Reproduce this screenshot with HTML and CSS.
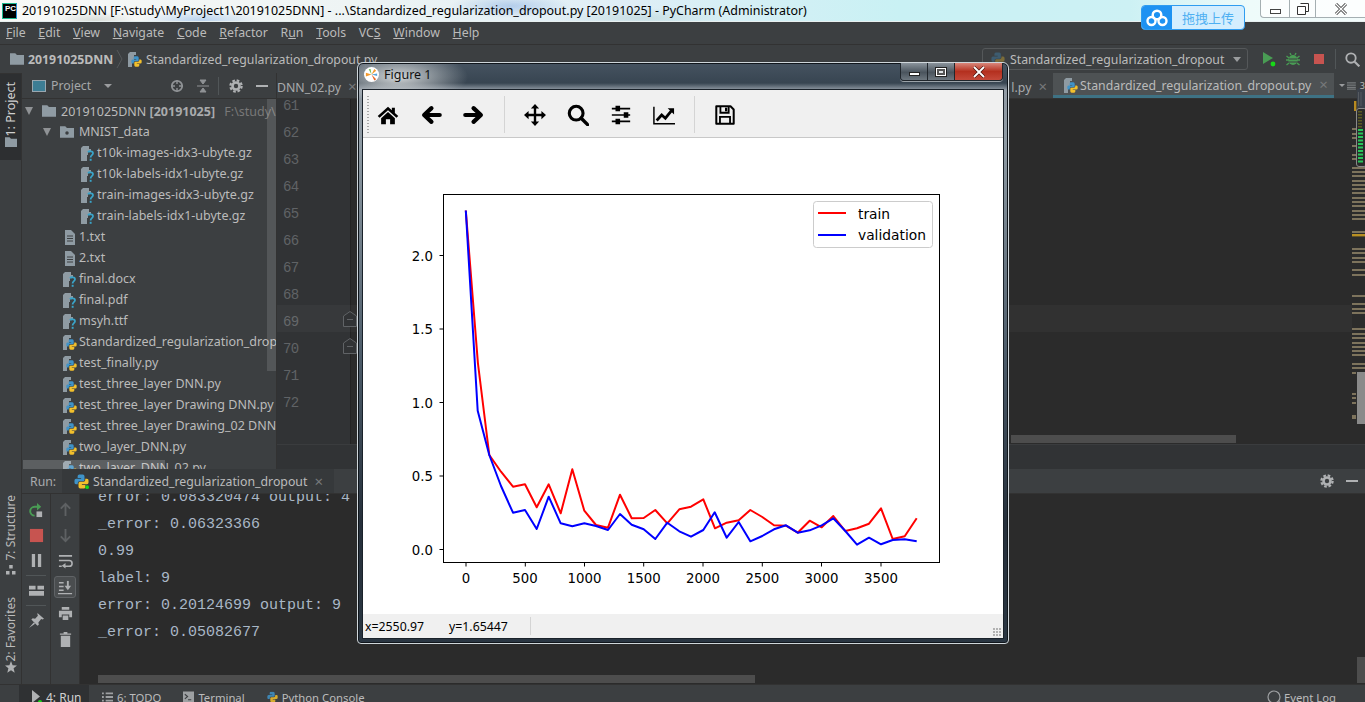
FILE: index.html
```html
<!DOCTYPE html>
<html lang="en">
<head>
<meta charset="utf-8">
<title>20191025DNN - PyCharm</title>
<link rel="stylesheet" href="styles.css">
</head>
<body>
<svg class="defs" width="0" height="0" aria-hidden="true">
  <defs>
    <symbol id="folder" viewBox="0 0 16 13"><path d="M0 0H6L8 2H16V13H0Z" fill="#8f9ba3"/></symbol>
    <symbol id="pkg" viewBox="0 0 16 13"><path d="M0 0H6L8 2H16V13H0Z" fill="#8f9ba3"/><circle cx="8" cy="7.5" r="2" fill="#3c3f41"/></symbol>
    <symbol id="txt" viewBox="0 0 16 16"><path d="M3 1H9L13 5V16H3Z" fill="#8f9ba3"/><path d="M5 7H11M5 9.5H11M5 12H11" stroke="#3c3f41"/></symbol>
    <symbol id="unk" viewBox="0 0 16 16"><path d="M1 3L3 1H9V4H11V7H8V10H7V16H1Z" fill="#8f9ba3"/><path d="M8 7.2C9 5.8 13 5.8 13 8.2C13 10.2 10.6 10 10.6 12.4" fill="none" stroke="#3aa4c9" stroke-width="1.8"/><rect x="9.7" y="13.8" width="1.9" height="2" fill="#3aa4c9"/></symbol>
    <symbol id="logo" viewBox="0 0 16 16">
      <path d="M5.6 0.5H9.4A2 2 0 0 1 11.2 2.4V6.2A1.6 1.6 0 0 1 9.6 7.8H5.8A2 2 0 0 0 4 9.6V11H2.2A1.9 1.9 0 0 1 0.5 9V6.9A1.9 1.9 0 0 1 2.2 5H7.6V4.2H3.9V2.2A1.8 1.8 0 0 1 5.6 0.5Z" fill="#3f93c8"/>
      <path d="M10.4 15.5H6.6A2 2 0 0 1 4.8 13.6V9.8A1.6 1.6 0 0 1 6.4 8.2H10.2A2 2 0 0 0 12 6.4V5H13.8A1.9 1.9 0 0 1 15.5 7V9.1A1.9 1.9 0 0 1 13.8 11H8.4V11.8H12.1V13.8A1.8 1.8 0 0 1 10.4 15.5Z" fill="#f2c02c"/>
    </symbol>
    <symbol id="py" viewBox="0 0 16 16">
      <path d="M1 3L3 1H9V4H7V10H5V16H1Z" fill="#8f9ba3"/>
      <use href="#logo" x="4" y="5" width="11" height="11"/>
    </symbol>
    <symbol id="gear" viewBox="0 0 16 16"><circle cx="8" cy="8" r="4" fill="none" stroke="#afb1b3" stroke-width="3"/><circle cx="8" cy="8" r="6.4" fill="none" stroke="#afb1b3" stroke-width="2.6" stroke-dasharray="3 2.03"/></symbol>
    <symbol id="foldmark" viewBox="0 0 14 16"><path d="M.5 15.500V5L7 .5L13.500 5V15.500Z" fill="#313335" stroke="#606366"/><path d="M4 8.500H10" stroke="#606366"/></symbol>
  </defs>
</svg>

<div class="ide">
  <header class="titlebar">
    <span class="pc-logo">PC</span>
    <span class="title-text">20191025DNN [F:\study\MyProject1\20191025DNN] - ...\Standardized_regularization_dropout.py [20191025] - PyCharm (Administrator)</span>
  </header>

  <nav class="menubar">
    <span><u>F</u>ile</span><span><u>E</u>dit</span><span><u>V</u>iew</span><span><u>N</u>avigate</span><span><u>C</u>ode</span><span><u>R</u>efactor</span><span>R<u>u</u>n</span><span><u>T</u>ools</span><span>VC<u>S</u></span><span><u>W</u>indow</span><span><u>H</u>elp</span>
  </nav>

  <div class="navbar">
    <svg class="nav-folder"><use href="#folder"/></svg>
    <b class="crumb-root">20191025DNN</b>
    <svg class="chev" viewBox="0 0 7 20"><path d="M1 1L6 10L1 19" fill="none" stroke="#55585a"/></svg>
    <svg class="ico16 nav-py"><use href="#py"/></svg>
    <span class="crumb">Standardized_regularization_dropout.py</span>
    <div class="run-config">
      <svg class="ico14 dim"><use href="#logo"/></svg>
      <span class="config-name">Standardized_regularization_dropout</span>
      <i class="caret"></i>
    </div>
    <svg class="nav-run" viewBox="0 0 14 16"><path d="M1 1L11 7L1 13Z" fill="#499c54"/><circle cx="11" cy="13" r="2.4" fill="#18d818"/></svg>
    <svg class="nav-bug" viewBox="0 0 14 14"><ellipse cx="7" cy="8" rx="4.6" ry="5" fill="#499c54"/><path d="M0.5 4L3 6M13.5 4L11 6M0 8H3M14 8H11M0.5 13L3 11M13.5 13L11 11M4 1L5 3M10 1L9 3" stroke="#499c54" stroke-width="1.4"/><path d="M3 7H11M3 10H11" stroke="#3c3f41"/></svg>
    <i class="nav-stop"></i>
    <i class="nav-div"></i>
    <svg class="nav-search" viewBox="0 0 14 14"><circle cx="5.6" cy="5.6" r="4.4" fill="none" stroke="#afb1b3" stroke-width="1.7"/><path d="M9 9L13.4 13.4" stroke="#afb1b3" stroke-width="2"/></svg>
  </div>

  <div class="workspace">
    <aside class="strip">
      <div class="strip-active">
        <span class="vtext">1: Project</span>
        <svg class="strip-folder"><use href="#folder"/></svg>
      </div>
      <div class="strip-lower">
        <span class="vtext">7: Structure</span>
        <svg class="strip-ico struct" viewBox="0 0 10 10"><path d="M3.2 0H6.7V3.5H3.2ZM0 6H3.5V9.5H0ZM6 6H9.5V9.5H6Z" fill="#afb1b3"/></svg>
        <span class="vtext fav">2: Favorites</span>
        <svg class="strip-ico star" viewBox="0 0 12 12"><path d="M6 0L7.6 4.2L12 4.5L8.6 7.3L9.7 11.8L6 9.3L2.3 11.8L3.4 7.3L0 4.5L4.4 4.2Z" fill="#afb1b3"/></svg>
      </div>
    </aside>

    <div class="center">
      <div class="upper">
        <section class="project">
          <div class="project-head">
            <svg class="proj-ico" viewBox="0 0 14 12"><rect x=".5" y=".5" width="13" height="11" fill="#3d7d94" stroke="#9aa7b0"/></svg>
            <span class="proj-label">Project</span>
            <i class="caret small"></i>
            <svg class="head-ico target" viewBox="0 0 14 14"><circle cx="7" cy="7" r="5.2" fill="none" stroke="#8f9295" stroke-width="1.8"/><path d="M7 1V5M7 9V13M1 7H5M9 7H13" stroke="#8f9295" stroke-width="1.4"/></svg>
            <svg class="head-ico collapse" viewBox="0 0 14 14"><path d="M1 7H13M7 5L4 1H10ZM7 9L4 13H10Z" stroke="#8f9295" fill="#8f9295"/></svg>
            <i class="head-div"></i>
            <svg class="head-ico cog"><use href="#gear"/></svg>
            <i class="head-min"></i>
          </div>
          <ul class="tree">
            <li class="lv0"><i class="arrow"></i><svg class="fold"><use href="#folder"/></svg><span>20191025DNN <b>[20191025]</b> <em>F:\study\MyProject1</em></span></li>
            <li class="lv1"><i class="arrow"></i><svg class="fold"><use href="#pkg"/></svg><span>MNIST_data</span></li>
            <li class="lv2"><svg class="file"><use href="#unk"/></svg><span>t10k-images-idx3-ubyte.gz</span></li>
            <li class="lv2"><svg class="file"><use href="#unk"/></svg><span>t10k-labels-idx1-ubyte.gz</span></li>
            <li class="lv2"><svg class="file"><use href="#unk"/></svg><span>train-images-idx3-ubyte.gz</span></li>
            <li class="lv2"><svg class="file"><use href="#unk"/></svg><span>train-labels-idx1-ubyte.gz</span></li>
            <li class="lv3"><svg class="file"><use href="#txt"/></svg><span>1.txt</span></li>
            <li class="lv3"><svg class="file"><use href="#txt"/></svg><span>2.txt</span></li>
            <li class="lv3"><svg class="file"><use href="#unk"/></svg><span>final.docx</span></li>
            <li class="lv3"><svg class="file"><use href="#unk"/></svg><span>final.pdf</span></li>
            <li class="lv3"><svg class="file"><use href="#unk"/></svg><span>msyh.ttf</span></li>
            <li class="lv3"><svg class="file"><use href="#py"/></svg><span>Standardized_regularization_dropout.py</span></li>
            <li class="lv3"><svg class="file"><use href="#py"/></svg><span>test_finally.py</span></li>
            <li class="lv3"><svg class="file"><use href="#py"/></svg><span>test_three_layer DNN.py</span></li>
            <li class="lv3"><svg class="file"><use href="#py"/></svg><span>test_three_layer Drawing DNN.py</span></li>
            <li class="lv3"><svg class="file"><use href="#py"/></svg><span>test_three_layer Drawing_02 DNN.py</span></li>
            <li class="lv3"><svg class="file"><use href="#py"/></svg><span>two_layer_DNN.py</span></li>
            <li class="lv3"><svg class="file"><use href="#py"/></svg><span>two_layer_DNN_02.py</span></li>
          </ul>
          <i class="tree-vbar"></i>
          <i class="tree-hbar"></i>
        </section>

        <section class="editor">
          <div class="tabs">
            <span class="tab tab-left">DNN_02.py <i class="x">×</i></span>
            <span class="tab-space"></span>
            <span class="tab tab-right">l.py <i class="x">×</i></span>
            <span class="tab active"><svg class="ico16"><use href="#py"/></svg>Standardized_regularization_dropout.py <i class="x">×</i></span>
            <span class="tab-more"><i class="caret tiny"></i><svg class="lines" viewBox="0 0 10 8"><path d="M0 .5H10M0 3H10M0 5.5H10M0 7.5H10" stroke="#8f9295"/></svg><small>3</small></span>
          </div>
          <div class="editor-body">
            <div class="gutter">
              <span>61</span><span>62</span><span>63</span><span>64</span><span>65</span><span>66</span><span>67</span><span>68</span><span>69</span><span>70</span><span>71</span><span>72</span>
            </div>
            <div class="code"></div>
            <i class="curline"></i>
            <svg class="foldmark f1"><use href="#foldmark"/></svg>
            <svg class="foldmark f2"><use href="#foldmark"/></svg>
            <i class="code-hbar"></i>
          </div>
          <div class="editor-foot"></div>
          <svg class="stripes" viewBox="1352 73 13 371">
            <g fill="#7d735c">
              <rect x="1352" y="128" width="4" height="2"/><rect x="1352" y="133" width="4" height="2"/><rect x="1352" y="137" width="4" height="2"/><rect x="1352" y="145" width="4" height="2"/><rect x="1352" y="154" width="4" height="2"/><rect x="1352" y="158" width="4" height="2"/>
              <rect x="1352" y="167" width="13" height="2"/><rect x="1352" y="171" width="13" height="2"/><rect x="1352" y="175" width="13" height="2"/><rect x="1352" y="180" width="13" height="2"/><rect x="1352" y="184" width="13" height="2"/><rect x="1352" y="188" width="13" height="2"/><rect x="1352" y="192" width="13" height="2"/><rect x="1352" y="197" width="13" height="2"/><rect x="1352" y="201" width="13" height="2"/><rect x="1352" y="205" width="13" height="2"/><rect x="1352" y="210" width="13" height="2"/><rect x="1352" y="214" width="13" height="2"/><rect x="1352" y="218" width="13" height="2"/><rect x="1352" y="231" width="13" height="2"/>
              <rect x="1352" y="248" width="13" height="2"/><rect x="1352" y="252" width="13" height="2"/><rect x="1352" y="257" width="13" height="2"/><rect x="1352" y="261" width="13" height="2"/><rect x="1352" y="269" width="13" height="2"/><rect x="1352" y="274" width="13" height="2"/><rect x="1352" y="295" width="13" height="2"/><rect x="1352" y="303" width="13" height="2"/><rect x="1352" y="308" width="13" height="2"/><rect x="1352" y="312" width="13" height="2"/><rect x="1352" y="328" width="13" height="2"/><rect x="1352" y="333" width="13" height="2"/><rect x="1352" y="337" width="13" height="2"/><rect x="1352" y="342" width="13" height="2"/><rect x="1352" y="346" width="13" height="2"/><rect x="1352" y="350" width="13" height="2"/><rect x="1352" y="354" width="13" height="2"/><rect x="1352" y="363" width="13" height="2"/><rect x="1352" y="367" width="13" height="2"/>
              <rect x="1352" y="372" width="4" height="2"/><rect x="1352" y="393" width="4" height="2"/><rect x="1352" y="397" width="4" height="2"/><rect x="1352" y="402" width="4" height="2"/><rect x="1352" y="415" width="4" height="4"/>
            </g>
            <rect x="1352" y="234" width="13" height="2.4" fill="#b88f22"/>
            <rect x="1354" y="101" width="2.4" height="10" fill="#b88a20"/>
            <rect x="1357" y="89" width="8" height="19" fill="#3b414a"/>
            <path d="M1358.500 92V106M1361 92V106" stroke="#555a60"/>
            <rect x="1356.500" y="108.500" width="10" height="58" rx="2.500" fill="#2b2b2b" stroke="#8a8a8a"/>
            <path d="M1360 111V128" stroke="#5b5a22" stroke-width="4" stroke-dasharray="1.500 1.500"/>
            <path d="M1360.500 129V163" stroke="#28c65a" stroke-width="5" stroke-dasharray="2 1.500"/>
            <rect x="1357" y="372" width="8" height="52" fill="#8a8a8a"/>
          </svg>
        </section>
      </div>

      <section class="run">
        <div class="run-head">
          <span class="run-label">Run:</span>
          <span class="run-tab">
            <svg class="run-logo" viewBox="0 0 16 16"><use href="#logo"/><circle cx="14" cy="14" r="2" fill="#18d818"/></svg>
            <span>Standardized_regularization_dropout</span>
            <i class="x">×</i>
          </span>
          <span class="run-tools">
            <svg class="head-ico"><use href="#gear"/></svg>
            <i class="head-min"></i>
          </span>
        </div>
        <div class="run-body">
          <div class="tool-col">
            <svg class="tb" viewBox="0 0 16 16"><path d="M9 4H6A4.500 4.500 0 1 0 6 13.500" fill="none" stroke="#499c54" stroke-width="2"/><path d="M8.500 0L13 4L8.500 8Z" fill="#499c54"/><rect x="8" y="9" width="6" height="6" fill="#afb1b3"/></svg>
            <svg class="tb" viewBox="0 0 16 16"><rect x="1" y="1" width="14" height="14" fill="#c75450"/></svg>
            <svg class="tb" viewBox="0 0 16 16"><path d="M3 1H6.500V15H3ZM9.500 1H13V15H9.500Z" fill="#afb1b3"/></svg>
            <i class="tool-sep"></i>
            <svg class="tb" viewBox="0 0 16 16"><path d="M0 3H7V7H0ZM9 3H16V7H9ZM0 8.500H16V13.500H0Z" fill="#afb1b3"/></svg>
            <i class="tool-sep"></i>
            <svg class="tb" viewBox="0 0 16 16"><path d="M9 0L16 6L14.500 7L13 6.500L10 10L10.500 12.500L9 13.500L2.500 7L4 5.500L6.500 6L9.500 3L9 1.500ZM5 10L6.500 11.500L0 16Z" fill="#afb1b3"/></svg>
          </div>
          <div class="tool-col col-two">
            <svg class="tb2" viewBox="0 0 16 16"><path d="M8 15V2M3 7L8 2L13 7" fill="none" stroke="#5e6163" stroke-width="2"/></svg>
            <svg class="tb2" viewBox="0 0 16 16"><path d="M8 1V14M3 9L8 14L13 9" fill="none" stroke="#5e6163" stroke-width="2"/></svg>
            <svg class="tb2" viewBox="0 0 16 16"><path d="M1 2H15M1 7H12A3 3 0 0 1 12 13H7M1 13H4" fill="none" stroke="#afb1b3" stroke-width="1.700"/><path d="M8 9.500V15.500L4 12.500Z" fill="#afb1b3"/></svg>
            <span class="tb-active"><svg class="tb2 bare" viewBox="0 0 16 16"><path d="M1 3H6M1 7H6M1 11H6M0 14.500H15" fill="none" stroke="#afb1b3" stroke-width="1.500"/><path d="M10.500 1V7" stroke="#afb1b3" stroke-width="2"/><path d="M7 6H14L10.500 11Z" fill="#afb1b3"/></svg></span>
            <svg class="tb2" viewBox="0 0 16 16"><path d="M4 1H12V4H4ZM1 5H15V12H12V9H4V12H1ZM5 10H11V15H5Z" fill="#afb1b3"/></svg>
            <svg class="tb2" viewBox="0 0 16 16"><path d="M6 0H10V1.500H14V3H2V1.500H6ZM3 4H13V16H3Z" fill="#afb1b3"/></svg>
          </div>
          <div class="console">
            <pre class="console-text">error: 0.083320474 output: 4
_error: 0.06323366
0.99
label: 9
error: 0.20124699 output: 9
_error: 0.05082677</pre>
            <i class="console-hbar"></i>
            <i class="console-vbar"></i>
          </div>
        </div>
      </section>
    </div>
  </div>

  <footer class="statusbar">
    <span class="st-item on"><svg class="st-play" viewBox="0 0 12 14"><path d="M1 0L9 6.500L1 13Z" fill="#afb1b3"/><circle cx="9" cy="12" r="2" fill="#18d818"/></svg>4: Run</span>
    <span class="st-item"><svg class="st-ico" viewBox="0 0 12 12"><path d="M0 1H2V3H0ZM4 1H12V3H4ZM0 5H2V7H0ZM4 5H12V7H4ZM0 9H2V11H0ZM4 9H12V11H4Z" fill="#afb1b3"/></svg>6: TODO</span>
    <span class="st-item"><svg class="st-ico" viewBox="0 0 12 12"><rect width="12" height="12" fill="#afb1b3"/><path d="M2 3L5 5.500L2 8M5.500 9H9" fill="none" stroke="#3c3f41" stroke-width="1.200"/></svg>Terminal</span>
    <span class="st-item"><svg class="st-ico" viewBox="0 0 16 16"><use href="#logo"/></svg>Python Console</span>
    <span class="st-spacer"></span>
    <span class="st-item log"><svg class="st-ico bubble" viewBox="0 0 14 14"><circle cx="7" cy="7" r="6" fill="none" stroke="#afb1b3" stroke-width="1.200"/><path d="M12 11L13.500 14" stroke="#afb1b3"/></svg>Event Log</span>
  </footer>
</div>

<div class="baidu">
  <span class="baidu-ico"><svg viewBox="0 0 22 18"><circle cx="11" cy="6" r="4.300" fill="none" stroke="#fff" stroke-width="2.400"/><circle cx="5.500" cy="12" r="4" fill="none" stroke="#fff" stroke-width="2.400"/><circle cx="16.500" cy="12" r="4" fill="none" stroke="#fff" stroke-width="2.400"/></svg></span>
  <span class="baidu-text">拖拽上传</span>
</div>

<div class="winctl">
  <span class="wc min"><i></i></span>
  <span class="wc res"><svg viewBox="0 0 12 12"><path d="M3.500 .5H11.500V8.500H9M.5 3.500H8.500V11.500H.5Z" fill="#fff" stroke="#333"/></svg></span>
  <span class="wc cls"><svg viewBox="0 0 14 12"><path d="M2 1L12 11M12 1L2 11" stroke="#444" stroke-width="3"/><path d="M2 1L12 11M12 1L2 11" stroke="#fff" stroke-width="1.200"/></svg></span>
</div>

<div class="figure">
  <div class="fig-title">
    <svg class="fig-logo" viewBox="0 0 16 16"><circle cx="8" cy="8" r="8" fill="#fff"/><path d="M8 8L2 6V10ZM8 8L11 2L13 4Z" fill="#f39a2e"/><path d="M8 8L13 13L11 14.500Z" fill="#e86a2a"/><path d="M8 8L5 2.500L7 2Z" fill="#6fbf5a"/><path d="M8 8L14 7V9.500Z" fill="#5aa6d8"/></svg>
    <span>Figure 1</span>
    <div class="fig-ctl">
      <span class="fc"><i class="fc-min"></i></span>
      <span class="fc"><i class="fc-max"></i></span>
      <span class="fc close"><svg viewBox="0 0 14 12"><path d="M2 1L12 11M12 1L2 11" stroke="#4a1510" stroke-width="3.200"/><path d="M2 1L12 11M12 1L2 11" stroke="#fff" stroke-width="1.800"/></svg></span>
    </div>
  </div>
  <div class="fig-client">
    <div class="fig-toolbar">
      <i class="grip"></i>
      <svg class="fi home" viewBox="0 0 24 24"><path d="M12 3L.8 13.200L2.800 15L12 6.800L21.200 15L23.200 13.200L19.500 9.800V4H16.200V6.800Z"/><path d="M4.500 15.500L12 8.800L19.500 15.500V22H14.300V16.500H9.700V22H4.500Z"/></svg>
      <svg class="fi back" viewBox="0 0 24 24"><path d="M21.500 12H6M12.500 4.500L4.500 12L12.500 19.500" fill="none" stroke="#000" stroke-width="4.600" stroke-linejoin="round" stroke-linecap="round"/></svg>
      <svg class="fi fwd" viewBox="0 0 24 24"><path d="M2.500 12H18M11.500 4.500L19.500 12L11.500 19.500" fill="none" stroke="#000" stroke-width="4.600" stroke-linejoin="round" stroke-linecap="round"/></svg>
      <i class="fig-sep"></i>
      <svg class="fi move" viewBox="0 0 24 24"><path d="M12 3V21M3 12H21" stroke="#000" stroke-width="2.600"/><path d="M12 0L16.500 5H7.500ZM12 24L16.500 19H7.500ZM0 12L5 7.500V16.500ZM24 12L19 7.500V16.500Z"/></svg>
      <svg class="fi zoom" viewBox="0 0 24 24"><circle cx="10" cy="10" r="7.500" fill="none" stroke="#000" stroke-width="3.400"/><path d="M15.500 15.500L22.500 22.500" stroke="#000" stroke-width="3.800" stroke-linecap="round"/></svg>
      <svg class="fi sliders" viewBox="0 0 24 24"><path d="M2 5H22M2 12H22M2 19H22" stroke="#000" stroke-width="1.800"/><path d="M6 2H11V8H6ZM15 9H20V15H15ZM6 16H11V22H6Z"/></svg>
      <svg class="fi chart" viewBox="0 0 24 24"><path d="M1 3V21.500H24" fill="none" stroke="#000" stroke-width="1.600"/><path d="M4 18L9.500 12L13.500 15.500L20 7.500" fill="none" stroke="#000" stroke-width="3"/><path d="M16 4.500H23V11.500Z"/></svg>
      <i class="fig-sep"></i>
      <svg class="fi save" viewBox="0 0 24 24"><path d="M2.500 2.500H18L21.500 6V21.500H2.500Z" fill="none" stroke="#000" stroke-width="2.200" stroke-linejoin="round"/><path d="M7 3V9.500H16V3" fill="none" stroke="#000" stroke-width="2"/><rect x="12" y="4" width="2.500" height="4"/><path d="M6.500 21V14H17.500V21" fill="none" stroke="#000" stroke-width="2"/></svg>
    </div>
    <svg class="plot" viewBox="363 138 640 476">
      <rect x="443.500" y="194.500" width="496" height="368" fill="#fff" stroke="#000"/>
      <path class="ticks" d="M466 562.500v4M525.300 562.500v4M584.500 562.500v4M643.700 562.500v4M703 562.500v4M762.300 562.500v4M821.500 562.500v4M881 562.500v4M443.500 549.500h-4M443.500 476h-4M443.500 402.500h-4M443.500 329h-4M443.500 255.500h-4"/>
      <g class="ticklabels">
        <text x="466" y="583" text-anchor="middle">0</text>
        <text x="525" y="583" text-anchor="middle">500</text>
        <text x="584.500" y="583" text-anchor="middle">1000</text>
        <text x="643.700" y="583" text-anchor="middle">1500</text>
        <text x="703" y="583" text-anchor="middle">2000</text>
        <text x="762.300" y="583" text-anchor="middle">2500</text>
        <text x="821.500" y="583" text-anchor="middle">3000</text>
        <text x="881" y="583" text-anchor="middle">3500</text>
        <text x="433" y="554.500" text-anchor="end">0.0</text>
        <text x="433" y="481" text-anchor="end">0.5</text>
        <text x="433" y="407.500" text-anchor="end">1.0</text>
        <text x="433" y="334" text-anchor="end">1.5</text>
        <text x="433" y="260.500" text-anchor="end">2.0</text>
      </g>
      <polyline class="red" points="465.800,210.500 477.900,363 489.300,455 501,471.700 513,486.700 525,484.300 536.700,507.300 548.700,484.300 560.700,513.300 572.300,469.300 584.300,510.700 596,525 608,527.700 620,494.700 631.700,518.300 643.700,518 655.300,510 667.300,523.300 679.300,509.300 691,506.700 703.300,499.300 715,528.300 726.700,522.700 738.700,520.300 750.300,510 762.300,517 774,525.300 786,525.700 797.700,532.700 809.700,520.700 821.700,527.300 833.300,516 845.300,531 857,528.300 869,523.700 881,508.300 892.700,539 904.700,536.300 916.700,518.300"/>
      <polyline class="blue" points="465.800,210.500 477.700,410.700 489.300,455 501,486 513,512.700 525,510 536.700,529 548.700,496.700 560.700,523.300 572.300,526.300 584.300,523.300 596,526 608,530 620,514 631.700,524.700 643.700,529.300 655.300,539 667.300,522.700 679.300,531.300 691,536.700 703.300,530 714.700,512.300 726.700,537.700 738.700,522 750.300,541.300 762.300,536 774,529.300 786,525.300 797.700,532.700 809.700,530.300 821.700,525.300 833.300,518.300 845.300,531 857,544.700 869,537.700 881,544.300 892.700,540 904.700,539.300 916.700,541.300"/>
      <rect x="813.500" y="201.500" width="119" height="46" rx="3" fill="#fff" stroke="#ccc"/>
      <path class="red" d="M818 213H846"/>
      <path class="blue" d="M818 235H846"/>
      <text class="legend" x="858" y="218.500">train</text>
      <text class="legend" x="858" y="240">validation</text>
    </svg>
    <div class="fig-status">
      <span class="coord-x">x=2550.97</span>
      <span class="coord-y">y=1.65447</span>
      <i class="status-div"></i>
      <i class="sizegrip"></i>
    </div>
  </div>
</div>
</body>
</html>
```

FILE: styles.css
```css
* { box-sizing: border-box; }
html, body { margin: 0; height: 100%; overflow: hidden; background: #3c3f41; }
body { font-family: "Noto Sans", "Noto Sans CJK SC", sans-serif; font-size: 12.3px; color: #bbbbbb; }
i { font-style: normal; display: block; }
.defs { position: absolute; }

.ide { display: flex; flex-direction: column; width: 1365px; height: 702px; }

/* window title */
.titlebar {
  flex: 0 0 22px; display: flex; align-items: center; padding-left: 2px; gap: 5px;
  color: #000; border-bottom: 1px solid #e8f0f0; white-space: nowrap;
  background:
    radial-gradient(ellipse 60px 10px at 200px 20px, rgba(120,170,230,.45), transparent),
    radial-gradient(ellipse 40px 8px at 95px 20px, rgba(160,170,160,.35), transparent),
    radial-gradient(ellipse 60px 12px at 510px 6px, rgba(130,170,225,.5), transparent),
    radial-gradient(ellipse 90px 10px at 640px 18px, rgba(170,200,200,.4), transparent),
    linear-gradient(90deg, #f8f9f7 0, #eef4f4 350px, #dfeef6 620px, #c9f1f4 900px, #cdf1f4 1130px, #eefbfa 1250px, #f2fbfb 1365px);
}
.pc-logo {
  width: 15px; height: 16px; flex: none; background: #000; color: #fff; font: 700 8px/10px "Liberation Sans", sans-serif;
  padding-left: 2px; border: 1px solid #1fb98f; border-right-color: #2a8fe0;
}
.title-text { font-size: 12.45px; line-height: 21px; }

/* menu */
.menubar { flex: 0 0 22px; display: flex; gap: 12.7px; padding-left: 6px; align-items: center; background: #3c3f41; line-height: 20px; }
.menubar u { text-underline-offset: 1px; }

/* navigation bar */
.navbar { flex: 0 0 29px; display: flex; align-items: center; padding-left: 10px; background: #3c3f41; border-top: 1px solid #323232; white-space: nowrap; }
.nav-folder { width: 14px; height: 12px; margin-right: 4px; }
.crumb-root { width: 88px; color: #bbbbbb; }
.chev { width: 7px; height: 20px; margin-right: 4px; }
.ico16 { width: 16px; height: 16px; flex: none; }
.ico14 { width: 14px; height: 14px; flex: none; }
.dim { opacity: .35; }
.nav-py { margin-right: 3px; }
.crumb { width: 836px; }
.run-config { width: 266px; height: 22px; display: flex; align-items: center; padding-left: 8px; border: 1px solid #55585a; border-radius: 3px; }
.config-name { margin-left: 5px; width: 223px; }
.caret { width: 0; height: 0; border-left: 4px solid transparent; border-right: 4px solid transparent; border-top: 5px solid #9a9c9e; }
.caret.small { border-left-width: 4px; border-right-width: 4px; border-top-width: 4px; margin-left: 8px; }
.caret.tiny { border-left-width: 3px; border-right-width: 3px; border-top-width: 3px; }
.nav-run { width: 14px; height: 16px; margin-left: 14px; }
.nav-bug { width: 14px; height: 14px; margin-left: 10px; }
.nav-stop { width: 10px; height: 10px; margin-left: 14px; background: #c75450; }
.nav-div { width: 1px; height: 20px; margin-left: 11px; background: #515658; }
.nav-search { width: 15px; height: 15px; margin-left: 9px; }

/* workspace */
.workspace { flex: 1; min-height: 0; display: flex; }
.strip { flex: 0 0 22px; display: flex; flex-direction: column; background: #3c3f41; border-right: 1px solid #323232; }
.strip-active { height: 87px; padding-top: 8px; display: flex; flex-direction: column; align-items: center; background: #2d2f31; border-top: 1px solid #323232; color: #d0d0d0; }
.vtext { writing-mode: vertical-rl; transform: rotate(180deg); font-size: 12px; line-height: 14px; white-space: nowrap; }
.strip-active .vtext { font-size: 12.5px; }
.strip-folder { width: 12px; height: 10px; margin-top: 0; }
.strip-lower { margin-top: auto; padding-bottom: 11px; display: flex; flex-direction: column; align-items: center; }
.strip-ico { display: block; }
.struct { width: 10px; height: 10px; margin-top: 4px; }
.fav { margin-top: 22px; }
.star { width: 12px; height: 12px; margin-top: 0; }

.center { flex: 1; min-width: 0; display: flex; flex-direction: column; }
.upper { flex: 0 0 396px; display: flex; min-height: 0; }

/* project tool window */
.project { position: relative; flex: 0 0 255px; overflow: hidden; background: #3c3f41; border-right: 1px solid #323232; }
.project-head { height: 26px; display: flex; align-items: center; padding-left: 10px; border-bottom: 1px solid #323232; }
.proj-ico { width: 14px; height: 12px; }
.proj-label { margin-left: 5px; width: 45px; color: #a5a7a9; }
.head-ico { width: 14px; height: 14px; flex: none; display: block; }
.target { margin-left: 58px; }
.collapse { margin-left: 12px; }
.head-div { width: 1px; height: 18px; background: #515658; margin-left: 8px; }
.cog { margin-left: 10px; }
.head-min { width: 12px; height: 2px; background: #afb1b3; margin-left: 13px; }
.tree { list-style: none; margin: 0; padding: 2px 0 0; color: #bbbbbb; white-space: nowrap; font-size: 12.5px; }
.tree li { height: 21px; display: flex; align-items: center; line-height: 21px; }
.tree li.lv0 { height: 20px; }
.tree em { font-style: normal; color: #787878; margin-left: 6px; }
.tree b { color: #a9abad; }
.arrow { width: 0; height: 0; border-left: 4.500px solid transparent; border-right: 4.500px solid transparent; border-top: 8px solid #8f9295; margin-right: 9px; }
.fold { width: 14px; height: 12px; margin-right: 4px; flex: none; }
.file { width: 16px; height: 16px; flex: none; margin-right: 1px; }
.lv0 { padding-left: 3px; }
.lv1 { padding-left: 21px; }
.lv0 .fold, .lv1 .fold { margin-right: 5px; }
.lv2 { padding-left: 58px; }
.lv3 { padding-left: 40px; }
.tree-vbar { position: absolute; right: 0; top: 26px; width: 9px; height: 272px; background: rgba(255,255,255,.12); }
.tree-hbar { position: absolute; left: 1px; bottom: 0; width: 142px; height: 9px; background: rgba(255,255,255,.17); }

/* editor */
.editor { position: relative; flex: 1; min-width: 0; display: flex; flex-direction: column; background: #2b2b2b; }
.tabs { flex: 0 0 26px; display: flex; align-items: center; background: #3c3f41; border-bottom: 1px solid #323232; white-space: nowrap; }
.tab { display: flex; align-items: center; height: 25px; padding-top: 3px; }
.tab .x { color: #77797b; font-size: 15px; margin-left: 7px; position: relative; top: -1px; }
.tab-space { flex: 1; }
.tab-left { width: 80px; color: #a8aaac; }
.tab-right { margin-right: 6px; color: #a8aaac; }
.active { width: 281px; padding-left: 10px; padding-top: 2px; background: #4e5254; border-bottom: 3px solid #3e7284; gap: 1px; }
.active .x { margin-left: 7px; }
.tab-more { width: 31px; display: flex; align-items: center; gap: 2px; padding-left: 5px; }
.lines { width: 10px; height: 8px; }
.tab-more small { font-size: 9px; margin-left: 2px; }
.editor-body { position: relative; flex: 1; min-height: 0; display: flex; overflow: hidden; }
.gutter { flex: 0 0 74px; display: flex; flex-direction: column; background: #313335; border-right: 1px solid #232323; padding-left: 6px; }
.gutter span { flex: none; height: 27px; font: 14px/27px "Liberation Mono", monospace; letter-spacing: -.6px; color: #606366; position: relative; top: -6px; }
.code { flex: 1; background: #2b2b2b; }
.curline { position: absolute; left: 0; right: 13px; top: 206px; height: 27px; background: rgba(255,255,255,.03); }
.foldmark { position: absolute; left: 66px; width: 14px; height: 16px; }
.f1 { top: 212px; }
.f2 { top: 239px; }
.code-hbar { position: absolute; left: 734px; bottom: 1px; width: 225px; height: 8px; background: #4d4d4d; }
.editor-foot { flex: 0 0 25px; background: #313335; border-top: 1px solid #3a3c3e; }
.stripes { position: absolute; right: 0; top: 0; width: 13px; height: 371px; }

/* run tool window */
.run { flex: 1; min-height: 0; display: flex; flex-direction: column; }
.run-head { flex: 0 0 25px; display: flex; align-items: center; background: #3c3f41; border-bottom: 1px solid #323232; white-space: nowrap; }
.run-label { width: 40px; padding-left: 8px; color: #a9abad; }
.run-tab { display: flex; align-items: center; width: 272px; height: 24px; padding-left: 12px; background: #36393b; }
.run-tab span { margin-left: 4px; }
.run-tab .x { color: #77797b; font-size: 15px; margin-left: 7px; }
.run-logo { width: 15px; height: 15px; }
.run-tools { margin-left: auto; display: flex; align-items: center; padding-right: 7px; }
.run-tools .head-min { margin-left: 12px; }
.run-body { flex: 1; min-height: 0; display: flex; }
.tool-col { flex: 0 0 29px; display: flex; flex-direction: column; align-items: center; padding-top: 9px; gap: 10px; background: #3c3f41; border-right: 1px solid #323232; }
.tool-col.col-two { gap: 0; padding-top: 2px; }
.tb { width: 15px; height: 15px; flex: none; }
.tb2 { width: 15px; height: 15px; flex: none; margin: 5.500px 0; }
.tb2.bare { margin: 0; }
.tool-sep { width: 20px; height: 1px; background: #515658; margin: -3px 0; flex: none; }
.tb-active { display: flex; align-items: center; justify-content: center; width: 22px; height: 22px; margin: 2px 0; background: #4a4d4f; border: 1px solid #606366; border-radius: 3px; flex: none; }
.console { position: relative; flex: 1; min-width: 0; background: #2b2b2b; overflow: hidden; }
.console-text { margin: -10px 0 0 18px; font: 15px/27px "Liberation Mono", monospace; color: #a9b7c6; }
.console-hbar { position: absolute; left: 18px; bottom: 1px; width: 657px; height: 8px; background: #4d4d4d; }
.console-vbar { position: absolute; right: 0; bottom: 1px; width: 8px; height: 26px; background: #4d4d4d; }

/* status bar */
.statusbar { flex: 0 0 18px; display: flex; align-items: flex-start; padding-left: 19px; background: #3c3f41; border-top: 1px solid #323232; overflow: hidden; white-space: nowrap; font-size: 11.3px; }
.st-item { display: flex; align-items: center; height: 20px; padding-top: 4px; line-height: 15px; margin-right: 22px; }
.st-item.on { width: 70px; background: #2f3133; padding-left: 12px; margin-right: 13px; color: #d0d0d0; font-size: 12px; }
.st-play { width: 12px; height: 14px; margin-right: 3px; }
.st-ico { width: 11px; height: 12px; margin-right: 4px; opacity: .85; }
.st-spacer { flex: 1; }
.log { margin-right: 29px; }
.bubble { width: 14px; height: 14px; margin-right: 3px; }

/* desktop overlays */
.baidu { position: absolute; left: 1141px; top: 5px; width: 104px; height: 25px; display: flex; border: 1px solid #2f9cf0; border-radius: 4px; overflow: hidden; background: #d4eefe; }
.baidu-ico { width: 30px; display: flex; align-items: center; justify-content: center; background: #1e92f2; }
.baidu-ico svg { width: 22px; height: 18px; }
.baidu-text { flex: 1; text-align: center; font: 13px/23px "Noto Sans CJK SC", sans-serif; color: #4fb0f2; }
.winctl { position: absolute; left: 1260px; top: 0; width: 105px; height: 18px; display: flex; background: rgba(255,255,255,.75); border: 1px solid #a5afb2; border-top: 0; border-right: 0; border-radius: 0 0 0 4px; }
.wc { display: flex; align-items: center; justify-content: center; border-right: 1px solid #a5afb2; }
.min { width: 29px; }
.min i { width: 11px; height: 5px; margin-top: 5px; background: #fff; border: 1px solid #444; }
.res { width: 26px; }
.res svg { width: 12px; height: 12px; }
.cls { flex: 1; border-right: 0; }
.cls svg { width: 14px; height: 12px; }

/* figure window */
.figure {
  position: absolute; left: 357px; top: 62px; width: 652px; height: 582px; display: flex; flex-direction: column;
  border: 1px solid #cfd6da; border-radius: 6px 6px 4px 4px; box-shadow: inset 0 0 0 1px #10161c;
  background:
    radial-gradient(ellipse 70px 26px at 40px 14px, rgba(225,228,228,.9), transparent),
    linear-gradient(180deg, rgba(70,84,98,.95) 0, rgba(55,70,84,.85) 20px, rgba(150,160,170,.95) 27px, #8f9ba4 80px, #4b5a68 300px, #26303b 460px, #2a3642 582px);
}
.fig-title { position: relative; flex: 0 0 27px; display: flex; align-items: center; padding: 0 0 5px 6px; gap: 5px; color: #111; font-size: 12.5px; }
.fig-logo { width: 15px; height: 15px; }
.fig-ctl { position: absolute; right: 5px; top: 0; display: flex; height: 18px; border: 1px solid #20262c; border-top: 0; border-radius: 0 0 4px 4px; overflow: hidden; box-shadow: 0 1px 0 rgba(255,255,255,.5); }
.fc { display: flex; align-items: center; justify-content: center; width: 27px; border-right: 1px solid #20262c; background: linear-gradient(180deg, #8a939b, #4a545d 55%, #6d777f); }
.fc-min { width: 11px; height: 4px; margin-top: 5px; background: #fff; border: 1px solid #222; }
.fc-max { width: 12px; height: 10px; background: #dfe3e6; border: 1px solid #222; box-shadow: inset 0 0 0 1px #fff, inset 0 0 0 3px #555; }
.fc.close { width: 47px; border-right: 0; background: linear-gradient(180deg, #d9867a, #b4301f 50%, #c4493a); }
.close svg { width: 14px; height: 12px; }
.fig-client { flex: 1; min-height: 0; margin: 0 5px 5px; display: flex; flex-direction: column; background: #fff; outline: 1px solid #1a222a; }
.fig-toolbar { position: relative; flex: 0 0 48px; display: flex; align-items: center; padding: 2px 0 0 4px; background: #f0f0f0; border-bottom: 1px solid #c8c8c8; }
.grip { width: 2px; height: 38px; background: repeating-linear-gradient(180deg, #a8a8a8 0 1px, transparent 1px 3px); margin-right: 8px; flex: none; }
.fi { width: 22px; height: 22px; flex: none; margin-right: 21px; display: block; }
.fig-sep { width: 1px; height: 37px; background: #d4d4d4; flex: none; margin-right: 19px; }
.back { margin-right: 21px; }
.fwd { margin-right: 19px; }
.chart { margin-right: 19px; }
.plot { flex: 0 0 476px; display: block; width: 640px; height: 476px; background: #fff; }
.ticks { stroke: #000; stroke-width: 1; fill: none; }
.ticklabels text { font-family: "DejaVu Sans", sans-serif; font-size: 13.3px; fill: #000; }
.legend { font-family: "DejaVu Sans", sans-serif; font-size: 13.8px; fill: #000; }
.red { fill: none; stroke: #ff0000; stroke-width: 2; stroke-linejoin: round; }
.blue { fill: none; stroke: #0000ff; stroke-width: 2; stroke-linejoin: round; }
.fig-status { position: relative; flex: 1; display: flex; align-items: center; padding-left: 2px; background: #f0f0f0; color: #000; font-size: 12.3px; white-space: nowrap; }
.coord-x { width: 84px; }
.coord-y { width: 81px; }
.status-div { width: 1px; height: 18px; background: #d4d4d4; }
.sizegrip { position: absolute; right: 2px; bottom: 2px; width: 8px; height: 8px; background: radial-gradient(circle at 1px 1px, #b0b0b0 .7px, transparent 1px) 0 0 / 3px 3px; }
```
